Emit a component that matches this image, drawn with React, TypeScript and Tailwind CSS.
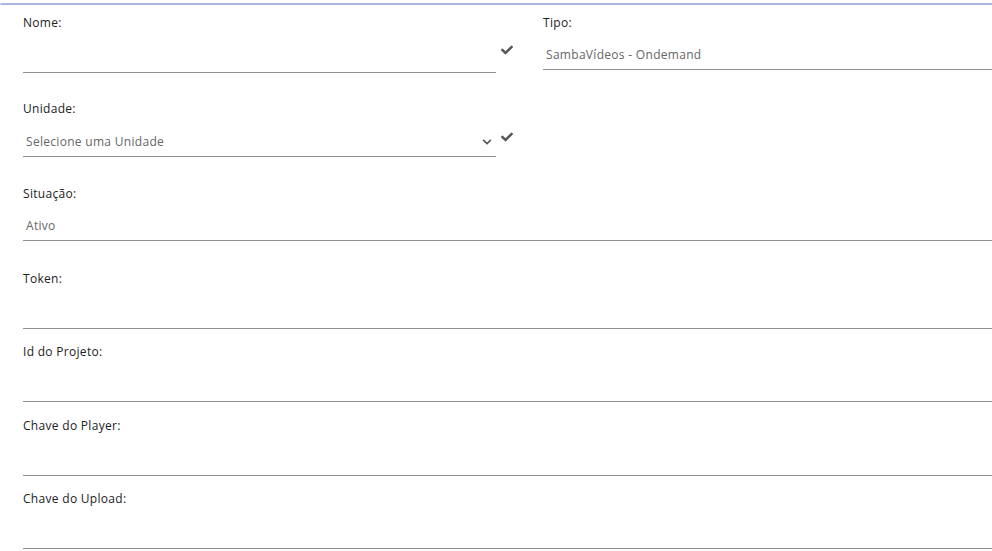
import React from 'react';

const font = { fontFamily: '"Open Sans", "Noto Sans", Arial, sans-serif' };

const Check: React.FC<{ className?: string }> = ({ className }) => (
  <svg viewBox="0 0 512 512" className={className} fill="currentColor">
    <path d="M173.9 439.4l-166.4-166.4c-10-10-10-26.2 0-36.2l36.2-36.2c10-10 26.2-10 36.2 0L192 312.7 432.1 72.6c10-10 26.2-10 36.2 0l36.2 36.2c10 10 10 26.2 0 36.2l-294.4 294.4c-10 10-26.2 10-36.2 0z" />
  </svg>
);

const Chevron: React.FC<{ className?: string }> = ({ className }) => (
  <svg viewBox="0 0 448 512" className={className} fill="currentColor">
    <path d="M207.029 381.476L12.686 187.132c-9.373-9.373-9.373-24.569 0-33.941l22.667-22.667c9.357-9.357 24.522-9.375 33.901-.04L224 284.505l154.745-154.021c9.379-9.335 24.544-9.317 33.901.04l22.667 22.667c9.373 9.373 9.373 24.569 0 33.941L240.971 381.476c-9.373 9.372-24.569 9.372-33.942 0z" />
  </svg>
);

const Label: React.FC<{ children: React.ReactNode }> = ({ children }) => (
  <label className="block h-[18px] text-[12px] leading-[18px] tracking-[0.3px] text-[#222]">{children}</label>
);

const LineField: React.FC<{ label: string; top: string }> = ({ label, top }) => (
  <div className={top}>
    <Label>{label}</Label>
    <div className="h-[41px] border-b border-[#8f8f8f]" />
  </div>
);

const App: React.FC = () => {
  return (
    <div className="h-[551px] w-[992px] overflow-hidden bg-white" style={font}>
      <div className="mt-[3px] h-[2px] rounded-tl-[3px] bg-[#a9b5e3]" />
      <div className="pl-[23px] pt-[9px]">
        <div className="flex">
          <div className="flex w-[520px]">
            <div className="w-[473px]">
              <Label>Nome:</Label>
              <div className="h-[41px] border-b border-[#8f8f8f]" />
            </div>
            <Check className="ml-[5px] mt-[30px] h-[12px] w-[12px] text-[#555]" />
          </div>
          <div className="flex-1">
            <Label>Tipo:</Label>
            <div className="flex h-[38px] items-center border-b border-[#8f8f8f] pl-[3px] pt-[8px] text-[12px] tracking-[0.3px] text-[#666]">
              SambaVídeos - Ondemand
            </div>
          </div>
        </div>

        <div className="mt-[27px] flex">
          <div className="w-[473px]">
            <Label>Unidade:</Label>
            <div className="flex h-[39px] items-center justify-between border-b border-[#8f8f8f] pl-[3px] pr-[4px] pt-[9px] text-[12px] tracking-[0.3px] text-[#666]">
              <span>Selecione uma Unidade</span>
              <Chevron className="h-[10px] w-[10px] text-[#555]" />
            </div>
          </div>
          <Check className="ml-[5px] mt-[31px] h-[12px] w-[12px] text-[#555]" />
        </div>

        <div className="mt-[28px]">
          <Label>Situação:</Label>
          <div className="flex h-[38px] items-center border-b border-[#8f8f8f] pl-[3px] pt-[8px] text-[12px] tracking-[0.3px] text-[#666]">
            Ativo
          </div>
        </div>

        <LineField label="Token:" top="mt-[29px]" />
        <LineField label="Id do Projeto:" top="mt-[14px]" />
        <LineField label="Chave do Player:" top="mt-[15px]" />
        <LineField label="Chave do Upload:" top="mt-[14px]" />
      </div>
    </div>
  );
};

export default App;
